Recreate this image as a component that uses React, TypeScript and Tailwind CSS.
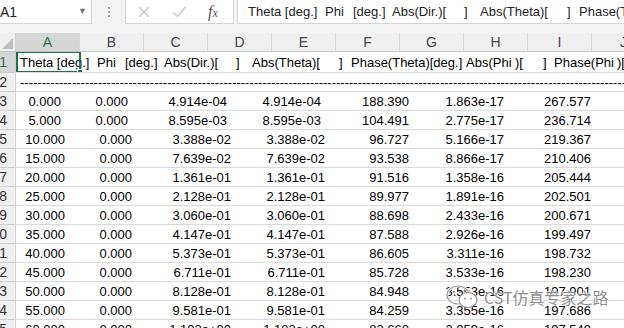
import React from 'react';

const cols = ['A', 'B', 'C', 'D', 'E', 'F', 'G', 'H', 'I', 'J'];

// one text line per row, exported by CST and dropped into column A
const rows: string[][] = [
    ['0.000', '0.000', '4.914e-04', '4.914e-04', '188.390', '1.863e-17', '267.577'],
    ['5.000', '0.000', '8.595e-03', '8.595e-03', '104.491', '2.775e-17', '236.714'],
    ['10.000', '0.000', '3.388e-02', '3.388e-02', '96.727', '5.166e-17', '219.367'],
    ['15.000', '0.000', '7.639e-02', '7.639e-02', '93.538', '8.866e-17', '210.406'],
    ['20.000', '0.000', '1.361e-01', '1.361e-01', '91.516', '1.358e-16', '205.444'],
    ['25.000', '0.000', '2.128e-01', '2.128e-01', '89.977', '1.891e-16', '202.501'],
    ['30.000', '0.000', '3.060e-01', '3.060e-01', '88.698', '2.433e-16', '200.671'],
    ['35.000', '0.000', '4.147e-01', '4.147e-01', '87.588', '2.926e-16', '199.497'],
    ['40.000', '0.000', '5.373e-01', '5.373e-01', '86.605', '3.311e-16', '198.732'],
    ['45.000', '0.000', '6.711e-01', '6.711e-01', '85.728', '3.533e-16', '198.230'],
    ['50.000', '0.000', '8.128e-01', '8.128e-01', '84.948', '3.553e-16', '197.901'],
    ['55.000', '0.000', '9.581e-01', '9.581e-01', '84.259', '3.355e-16', '197.686'],
    ['60.000', '0.000', '1.102e+00', '1.102e+00', '83.660', '3.059e-16', '197.549'],
];

function HeaderText() {
    // header line of the export, spaced like the original
    return (
        <div className="flex whitespace-pre">
            <span className="w-[77px] shrink-0">Theta [deg.]</span>
            <span className="w-[28px] shrink-0">Phi</span>
            <span className="w-[39px] shrink-0">[deg.]</span>
            <span className="w-[72px] shrink-0">Abs(Dir.)[</span>
            <span className="w-[16px] shrink-0">]</span>
            <span className="w-[87px] shrink-0">Abs(Theta)[</span>
            <span className="w-[12px] shrink-0">]</span>
            <span className="w-[115px] shrink-0">Phase(Theta)[deg.]</span>
            <span className="w-[49px] shrink-0">Abs(Phi</span>
            <span className="w-[28px] shrink-0">)[</span>
            <span className="w-[11px] shrink-0">]</span>
            <span className="w-[63px] shrink-0">Phase(Phi</span>
            <span className="shrink-0">)[</span>
        </div>
    );
}

function RowHead({ n, active = false }: { n: number; active?: boolean }) {
    return (
        <div
            className={`w-[16px] shrink-0 overflow-hidden flex items-center justify-end pr-[8px] text-[14px] border-r border-b border-[#d0d0d0] ${
                active ? 'bg-[#d6d6d6] text-[#217346]' : 'bg-[#f0f0f0] text-[#333]'
            }`}
        >
            {n}
        </div>
    );
}

function DataLine({ v }: { v: string[] }) {
    const wide = v[0].length > 5;
    const short = parseFloat(v[4]) < 100;
    return (
        <div className="flex whitespace-pre text-black">
            <span className={`${wide ? 'w-[49px]' : 'w-[45px]'} shrink-0 text-right`}>{v[0]}</span>
            <span className="w-[67px] shrink-0 text-right">{v[1]}</span>
            <span className="w-[99px] shrink-0 text-right">{v[2]}</span>
            <span className="w-[94px] shrink-0 text-right">{v[3]}</span>
            <span className={`${short ? 'w-[84px]' : 'w-[88px]'} shrink-0 text-right`}>{v[4]}</span>
            <span className="w-[95px] shrink-0 text-right">{v[5]}</span>
            <span className="w-[87px] shrink-0 text-right">{v[6]}</span>
        </div>
    );
}

export default function App() {
    return (
        <div className="w-[624px] h-[328px] overflow-hidden bg-white relative font-['Liberation_Sans',Arial,sans-serif] text-[13px] leading-none">
            {/* formula bar */}
            <div className="h-[33px] bg-[#f3f3f3] flex items-start">
                <div className="w-[92px] h-[24px] shrink-0 bg-white border-r border-b border-[#d4d4d4] flex items-center justify-between pr-[4px] text-[14px] text-[#222]">
                    <span>A1</span>
                    <span className="text-[9px] text-[#777]">▼</span>
                </div>
                <div className="w-[33px] h-[24px] shrink-0 flex flex-col items-center justify-center gap-[2px]">
                    <span className="w-[2px] h-[2px] bg-[#a0a0a0]" />
                    <span className="w-[2px] h-[2px] bg-[#a0a0a0]" />
                    <span className="w-[2px] h-[2px] bg-[#a0a0a0]" />
                </div>
                <div className="w-[109px] h-[24px] shrink-0 bg-white border-l border-r border-b border-[#d4d4d4] flex items-center">
                    <svg width="14" height="14" viewBox="0 0 14 14" className="ml-[11px]">
                        <path d="M2 2 L12 12 M12 2 L2 12" stroke="#c4c4c4" strokeWidth="1.3" fill="none" />
                    </svg>
                    <svg width="15" height="14" viewBox="0 0 15 14" className="ml-[21px]">
                        <path d="M1.5 7.5 L5.5 11.5 L13.5 2" stroke="#c4c4c4" strokeWidth="1.3" fill="none" />
                    </svg>
                    <span className="ml-[21px] font-['Liberation_Serif',serif] italic text-[16px] text-[#555]">
                        f<span className="text-[12px]">x</span>
                    </span>
                </div>
                <div className="ml-[3px] flex-1 h-[24px] bg-white border-l border-b border-[#d4d4d4] flex items-center pl-[10px] overflow-hidden text-[#222]">
                    <HeaderText />
                </div>
            </div>

            {/* column headers */}
            <div className="flex h-[19px] border-b border-[#c6c6c6] bg-[#f0f0f0] text-[14px] text-[#444]">
                <div className="w-[16px] shrink-0 border-r border-[#d0d0d0] flex items-end justify-end p-[2px]">
                    <svg width="11" height="11" viewBox="0 0 11 11">
                        <path d="M11 0 L11 11 L0 11 Z" fill="#bdbdbd" />
                    </svg>
                </div>
                {cols.map((c, i) => (
                    <div
                        key={c}
                        className={`w-[64px] shrink-0 flex items-center justify-center border-r border-[#d8d8d8] ${
                            i === 0 ? 'bg-[#d6d6d6] text-[#217346]' : ''
                        }`}
                    >
                        {c}
                    </div>
                ))}
            </div>

            {/* row 1 */}
            <div className="flex h-[21px]">
                <RowHead n={1} active />
                <div className="flex-1 relative border-b border-[#dadada] flex items-center pl-[4px] text-black overflow-hidden">
                    <HeaderText />
                    <div className="absolute left-0 top-[-1px] w-[65px] h-[22px] border-2 border-[#217346]" />
                    <div className="absolute left-[61px] top-[17px] w-[6px] h-[6px] bg-[#217346] border border-white" />
                </div>
            </div>

            {/* row 2 */}
            <div className="flex h-[19px]">
                <RowHead n={2} />
                <div className="flex-1 border-b border-[#dadada] flex items-center pl-[4px] overflow-hidden whitespace-pre text-black">
                    {'-'.repeat(160)}
                </div>
            </div>

            {rows.map((r, i) => (
                <div key={i} className="flex h-[19px]">
                    <RowHead n={i + 3} />
                    <div className="flex-1 border-b border-[#dadada] flex items-center overflow-hidden">
                        <DataLine v={r} />
                    </div>
                </div>
            ))}

            {/* watermark */}
            <div className="absolute left-[445px] top-[284px] flex items-center gap-[3px]">
                <svg width="36" height="26" viewBox="0 0 36 26">
                    <ellipse cx="13" cy="11" rx="11" ry="9" fill="none" stroke="#fff" strokeWidth="3" />
                    <ellipse cx="13" cy="11" rx="11" ry="9" fill="none" stroke="#999" strokeWidth="1.2" />
                    <ellipse cx="23" cy="16" rx="9" ry="7.5" fill="white" stroke="#999" strokeWidth="1.2" />
                    <circle cx="9" cy="8" r="1.2" fill="#999" />
                    <circle cx="15" cy="8" r="1.2" fill="#999" />
                    <circle cx="20" cy="14.5" r="1" fill="#999" />
                    <circle cx="26" cy="14.5" r="1" fill="#999" />
                </svg>
                <span className="font-['Noto_Sans_CJK_SC',sans-serif] text-[16px] text-[#8f8f8f] [text-shadow:0_0_2px_#fff,0_0_2px_#fff,0_0_1px_#fff]">
                    CST仿真专家之路
                </span>
            </div>
        </div>
    );
}
